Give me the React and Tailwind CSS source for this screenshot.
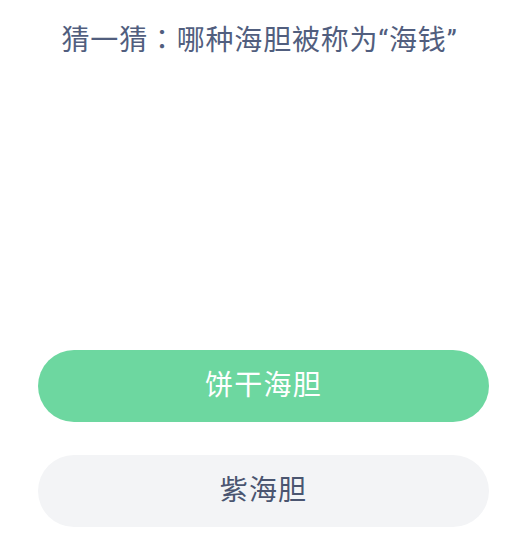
export default function App() {
  return (
    <div className="w-[519px] h-[554px] bg-white overflow-hidden flex flex-col" style={{ fontFamily: 'Roboto, "Noto Sans CJK SC", sans-serif' }}>
      <div className="h-[76px] pt-[18px] flex justify-center">
        <div className="text-[28px] leading-[40px] tracking-[0.8px] text-[#515e7e] whitespace-nowrap">
          猜一猜<span className="font-['Noto_Sans_CJK_TC',sans-serif]">：</span>哪种海胆被称为“海钱”
        </div>
      </div>
      <div className="h-[274px]"></div>
      <div className="ml-[38px] w-[451px] h-[72px] rounded-full bg-[#6dd7a0] flex items-center justify-center text-white text-[28px] tracking-[1.2px]">饼干海胆</div>
      <div className="h-[33px]"></div>
      <div className="ml-[38px] w-[451px] h-[72px] rounded-full bg-[#f3f4f6] flex items-center justify-center text-[#4a5570] text-[28px] tracking-[1.2px]">紫海胆</div>
    </div>
  );
}
